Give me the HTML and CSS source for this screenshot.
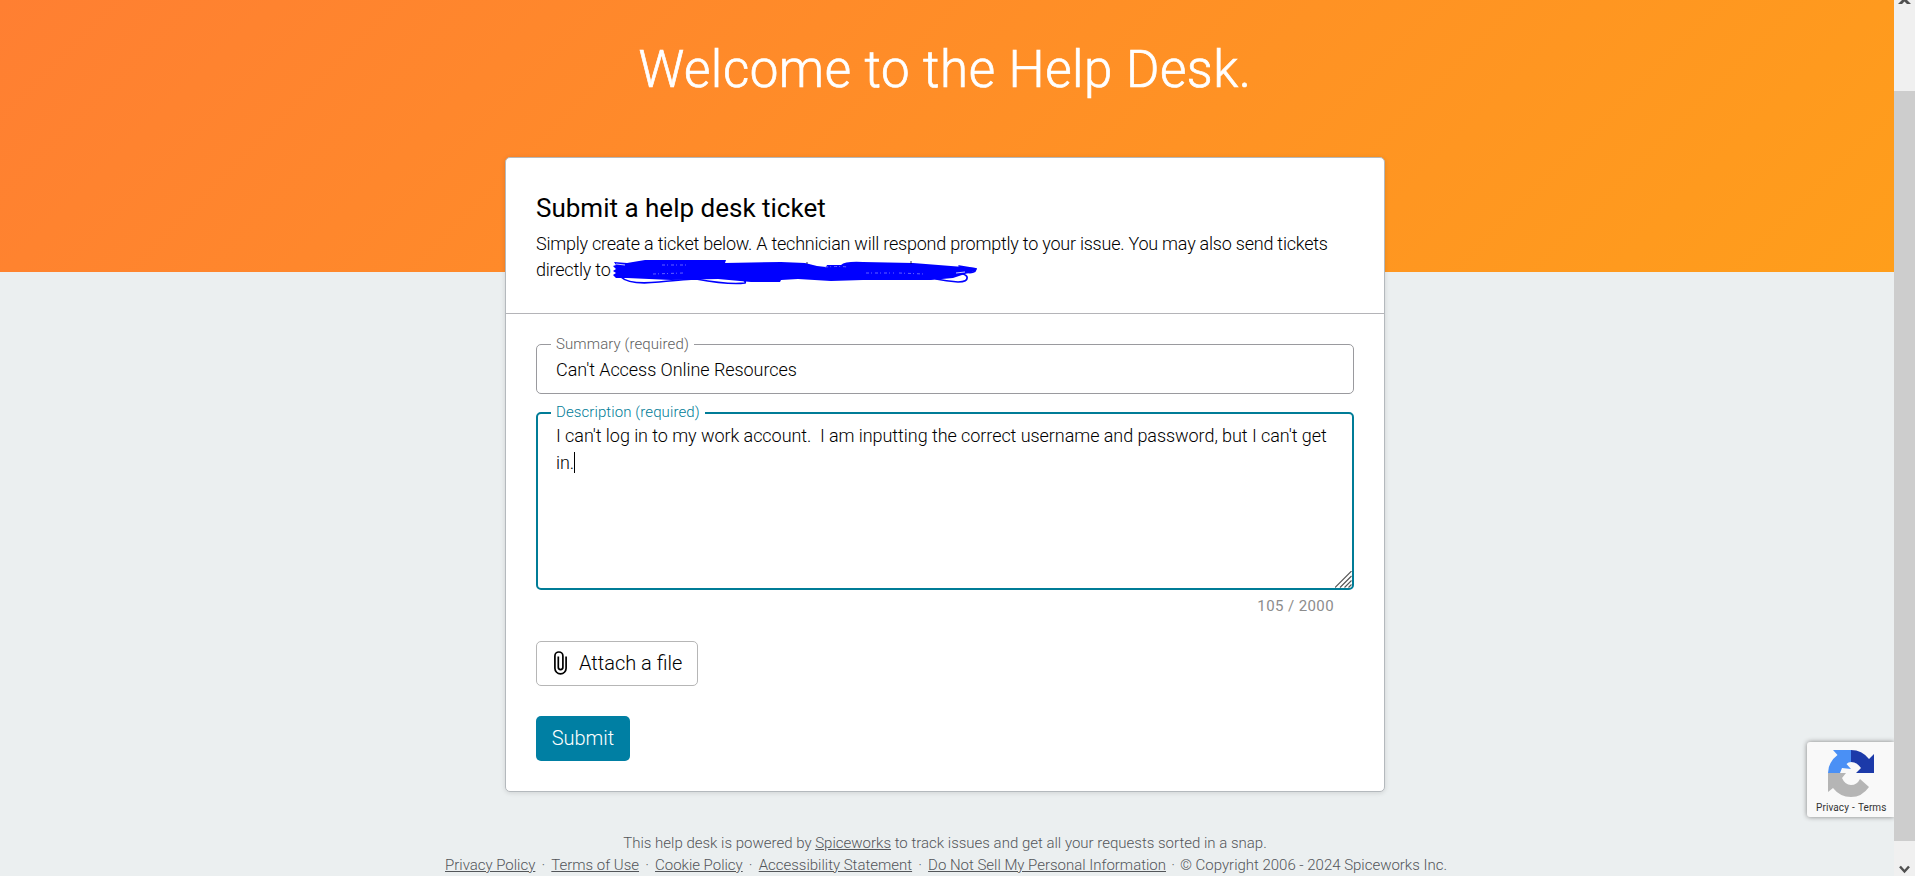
FILE: index.html
```html
<!DOCTYPE html>
<html lang="en">
<head>
<meta charset="utf-8">
<title>Help Desk</title>
<link rel="stylesheet" href="styles.css">
</head>
<body>
<div class="page">
  <div class="banner"></div>
  <div class="content">
    <h1 class="welcome"><span>Welcome to the Help Desk.</span></h1>
    <main class="card">
      <header class="card-head">
        <h2 class="title"><span>Submit a help desk ticket</span></h2>
        <p class="intro"><span class="intro-a">Simply create a ticket below. A technician will respond promptly to your issue. You may also send tickets</span><br>directly to
          <svg class="scribble" width="366" height="26" viewBox="0 0 366 26"><path fill="#00f" d="M1 2L14 3L32 0L113 0L112 3L168 2L192 3L204 6L213 7L214 5L228 5Q232 1 250 2L300 3L338 6L363 8L362 11L352 14L340 18L318 20L250 20L218 21L185 19L168 20L167 22L138 22L105 19L58 20L14 18L3 18L0 15L3 13L0 11L3 9L0 6L3 5Z"/><path fill="none" stroke="#00f" stroke-width="1.700" stroke-linecap="round" d="M8 17Q16 25 46 22T83 19Q116 25 132 23Q134 19 120 19M330 13Q353 12 354 17T345 22Q333 21 323 19M346 6L363 9Q362 14 352 12"/><path fill="none" stroke="#fff" stroke-width=".8" d="M3 4L12 5M343 13L352 12"/><path fill="none" stroke="#003" stroke-width=".8" d="M298 1V4M194 2V4"/><path fill="none" stroke="#8c8cff" stroke-width=".7" stroke-dasharray="3 2 1 3" d="M49 5H74M40 14L70 13M212 7Q228 6 234 7M253 13H281M286 13L311 14"/></svg></p>
      </header>
      <form class="card-body">
        <div class="field">
          <label class="label">Summary (required)</label>
          <div class="value">Can't Access Online Resources</div>
        </div>
        <div class="field focused">
          <label class="label">Description (required)</label>
          <div class="value"><span class="desc">I can't log in to my work account.&nbsp; I am inputting the correct username and password, but I can't get</span><br>in.<span class="caret"></span></div>
          <svg class="grip" width="17" height="17" viewBox="0 0 17 17" fill="none" stroke="#555" stroke-width="1.1"><path d="M0 16.500L16.500 0M5 16.500L16.500 5M9.500 16.500L16.500 9.500M13.500 16.500L16.500 13.500"/></svg>
        </div>
        <div class="count">105 / 2000</div>
        <button type="button" class="btn attach"><svg width="13" height="24" viewBox="0 0 13 24" fill="none" stroke="#000" stroke-width="1.7"><path d="M12.100 5.500V17.300A5.600 5.600 0 0 1 .9 17.300V5A4 4 0 0 1 8.900 5V16.300A2.300 2.300 0 0 1 4.300 16.300V5.500"/></svg><span>Attach a file</span></button>
        <button type="button" class="btn submit"><span>Submit</span></button>
      </form>
    </main>
    <footer class="foot">
      <div><span class="foot-a">This help desk is powered by <a>Spiceworks</a> to track issues and get all your requests sorted in a snap.</span></div>
      <div class="links"><a class="l1">Privacy Policy</a><i>·</i><a>Terms of Use</a><i>·</i><a>Cookie Policy</a><i>·</i><a>Accessibility Statement</a><i>·</i><a>Do Not Sell My Personal Information</a><i class="tight">·</i><span>© Copyright 2006 - 2024 Spiceworks Inc.</span></div>
    </footer>
  </div>
</div>
<aside class="recaptcha">
  <svg width="47" height="47" viewBox="0 0 47 47"><path fill="#4a90f5" d="M0 23A23 23 0 0 1 9.500 5L5 0H23.500V12Q20 12 18.500 14L23 19L14 18L12 23Z"/><path fill="#1c3aa9" d="M23 0Q34 0 41 9L46 4V23H28L33 18Q29 12 23 12Z"/><path fill="#b5b5b5" d="M0 23H18L14 28Q17 35 23 35Q29 35 32 29L41 37Q34 47 23 47Q12 47 5 38L0 42Z"/></svg>
  <div class="terms">Privacy<b>-</b>Terms</div>
</aside>
<div class="scrollbar">
  <svg class="arrow-up" width="13" height="5" viewBox="0 0 13 5"><path fill="#505050" d="M0 4L4 0H9L13 4H9L6.500 1.500L4 4Z"/></svg>
  <div class="thumb"></div>
  <svg class="arrow-down" width="11" height="9" viewBox="0 0 11 9" fill="none" stroke="#505050" stroke-width="2.500"><path d="M1 1.500L5.500 6.500L10 1.500"/></svg>
</div>
</body>
</html>
```
FILE: styles.css
```css
* { box-sizing: border-box; }
body {
  margin: 0;
  height: 876px;
  overflow: hidden;
  display: flex;
  background: #ebeff0;
  font-family: Roboto, "Liberation Sans", sans-serif;
  font-weight: 300;
  color: #000;
}
.page { width: 1894px; height: 876px; display: grid; }
.banner, .content { grid-area: 1 / 1; }
.banner { height: 272px; background: linear-gradient(135deg, #ff7f32 0%, #ff9e1b 100%); }
.content {
  padding-right: 4px;
  display: flex;
  flex-direction: column;
  align-items: center;
  position: relative;
}
.welcome {
  margin: 0;
  height: 157px;
  padding-top: 40px;
  font-size: 51px;
  line-height: 60px;
  letter-spacing: .55px;
  font-weight: 300;
  color: #fff;
  -webkit-text-stroke: .7px #fff;
  white-space: nowrap;
}
.card {
  width: 880px;
  height: 635px;
  border: 1px solid #b4b9bd;
  border-radius: 5px;
  background: #fff;
  box-shadow: 0 1px 5px rgba(0, 0, 0, .12);
}
.card-head { height: 156px; padding: 35px 30px 0; border-bottom: 1px solid #b4b4b8; }
.title { margin: 0; font-size: 26px; line-height: 30px; font-weight: 400; }
.intro { margin: 8px 0 0; font-size: 18px; line-height: 26px; letter-spacing: -.23px; white-space: nowrap; }
.scribble { display: inline-block; vertical-align: top; margin: 3px 0 0 -2px; }
.card-body { padding: 30px 30px 0; display: flex; flex-direction: column; align-items: flex-start; }
.field {
  position: relative;
  width: 818px;
  height: 50px;
  border: 1px solid #9a9a9e;
  border-radius: 5px;
  padding: 11px 19px;
  font-size: 18px;
  line-height: 27px;
  letter-spacing: -.06px;
  white-space: nowrap;
}
.label {
  position: absolute;
  left: 14px;
  top: -10px;
  padding: 0 5px;
  background: #fff;
  font-size: 15px;
  line-height: 18px;
  letter-spacing: .1px;
  color: #606060;
}
.focused { margin-top: 18px; height: 178px; border: 2px solid #007c97; padding: 8px 18px; }
.focused .label { left: 13px; top: -11px; color: #007c97; }
.caret { display: inline-block; width: 1px; height: 21px; background: #000; vertical-align: -4px; }
.grip { position: absolute; right: 0; bottom: 0; }
.count {
  align-self: flex-end;
  margin: 6px 20px 0 0;
  font-size: 15px;
  line-height: 20px;
  letter-spacing: .4px;
  font-weight: 400;
  color: #8c8c8c;
}
.btn {
  height: 45px;
  border-radius: 5px;
  font: 300 20px/24px Roboto, "Liberation Sans", sans-serif;
  display: flex;
  align-items: center;
  white-space: nowrap;
}
.attach { margin-top: 25px; width: 162px; padding: 0 0 2px 17px; gap: 12px; border: 1px solid #b6b6b6; background: #fff; color: #000; }
.submit { margin-top: 30px; width: 94px; padding: 0 0 2px; justify-content: center; border: 0; background: #007fa3; color: #fff; }
.foot { margin-top: 40px; font-size: 15px; line-height: 22px; color: #53565a; text-align: center; white-space: nowrap; }
.foot a { text-decoration: underline; }
.foot i { font-style: normal; display: inline-block; width: 16px; text-align: center; }
.foot .tight { width: 14px; }
.recaptcha {
  position: absolute;
  left: 1807px;
  top: 742px;
  width: 87px;
  height: 75px;
  padding: 8px 0 0 21px;
  background: #f9f9f9;
  border-radius: 3px 0 0 3px;
  box-shadow: 0 0 5px gray;
  clip-path: inset(-8px 0 -8px -8px);
}
.recaptcha svg { display: block; }
.terms { margin: 5px 0 0 -12px; font-size: 10px; line-height: 12px; font-weight: 400; letter-spacing: .1px; color: #333; white-space: nowrap; }
.terms b { font-weight: 400; margin: 0 3px; }
.links { letter-spacing: -.014px; padding-left: 2px; }
.scrollbar { width: 21px; height: 876px; background: #f0f0f0; display: flex; flex-direction: column; align-items: center; }
.arrow-up { display: block; height: 5px; }
.thumb { margin-top: 86px; width: 21px; height: 750px; background: #cdcdcd; }
.arrow-down { margin-top: 24px; }
```
